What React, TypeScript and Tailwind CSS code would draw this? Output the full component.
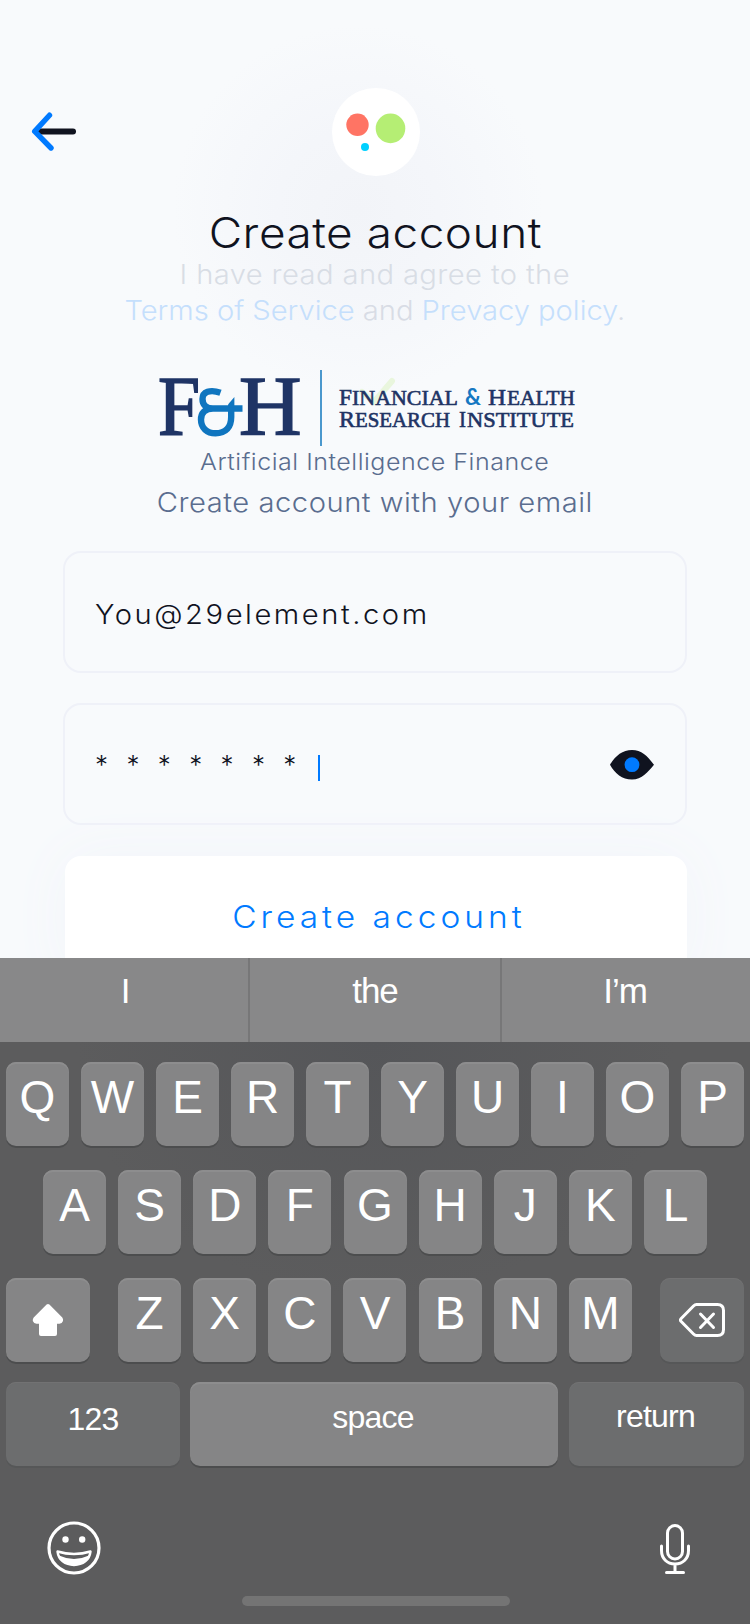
import React from 'react';

const brandFont = 'font-[Inter,sans-serif] font-[330] whitespace-nowrap scale-x-[1.08]';
const keyFont = "font-['Liberation_Sans',Arial,sans-serif] text-white";

function BackArrow() {
  return (
    <svg width="46" height="42" viewBox="0 0 46 42" fill="none" strokeLinecap="round">
      <path d="M10 20.5H42" stroke="#10131f" strokeWidth="6" />
      <path d="M18.5 4.2L3.7 20.4L20 37" stroke="#007aff" strokeWidth="5.4" strokeLinejoin="round" />
    </svg>
  );
}

function AppMark() {
  return (
    <svg width="88" height="88" viewBox="0 0 88 88">
      <circle cx="44" cy="44" r="44" fill="#fff" />
      <circle cx="25.5" cy="36.8" r="11.2" fill="#ff7464" />
      <circle cx="58.5" cy="40.4" r="14.8" fill="#b5ee74" />
      <circle cx="33" cy="59" r="4" fill="#00d0ff" />
    </svg>
  );
}

const bigCap = { fontSize: 84, stroke: '#1f3465', strokeWidth: 1.6, lengthAdjust: 'spacingAndGlyphs' } as const;
const smallCap = { stroke: '#1f3465', strokeWidth: 0.6, lengthAdjust: 'spacingAndGlyphs' } as const;

function InstituteLogo() {
  return (
    <svg width="420" height="80" viewBox="0 0 420 80" className="overflow-visible font-['Liberation_Serif',serif] font-normal" fill="#1f3465">
      <path d="M206 24L218 34L236 13" fill="none" stroke="#e9f6dd" strokeWidth="6" strokeLinecap="round" strokeLinejoin="round" />
      <text x="2" y="67" textLength="42" {...bigCap}>F</text>
      <text x="83" y="67" textLength="62.5" {...bigCap}>H</text>
      <path
        d="M64.5 24.8C54 21 46.5 24 46.5 31C46.5 37 50 40.5 57 40.5H86.5M57 40.5C48.500 40.5 45 45.500 45 51.500C45 60 51 65.3 59.500 65.3C70 65.3 75.200 59 75.200 49V39"
        fill="none"
        stroke="#f8fafc"
        strokeWidth="8"
      />
      <path
        d="M64.5 24.8C54 21 46.5 24 46.5 31C46.5 37 50 40.5 57 40.5H86.500M57 40.5C48.500 40.5 45 45.500 45 51.500C45 60 51 65.3 59.500 65.3C70 65.3 75.200 59 75.200 49V39"
        fill="none"
        stroke="#0f75bf"
        strokeWidth="6.4"
      />
      <path d="M72 39.500V36.500L78.400 29V39.500Z" fill="#0f75bf" />
      <rect x="164" y="2" width="2" height="76" fill="#4b98cd" />
      <g>
        <text x="183" y="37" fontSize="24" textLength="13" {...smallCap}>F</text>
        <text x="196" y="37" fontSize="20.500" textLength="106" {...smallCap}>INANCIAL</text>
        <text x="309" y="37" fontSize="22" fill="#1578c2" className="font-[Lato,sans-serif] font-bold" textLength="16" lengthAdjust="spacingAndGlyphs">&amp;</text>
        <text x="332" y="37" fontSize="24" textLength="18" {...smallCap}>H</text>
        <text x="351" y="37" fontSize="20.500" textLength="68" {...smallCap}>EALTH</text>
        <text x="183" y="59" fontSize="24" textLength="16" {...smallCap}>R</text>
        <text x="199" y="59" fontSize="20.500" textLength="95" {...smallCap}>ESEARCH</text>
        <text x="303" y="59" fontSize="24" textLength="7" {...smallCap}>I</text>
        <text x="311" y="59" fontSize="20.500" textLength="107" {...smallCap}>NSTITUTE</text>
      </g>
    </svg>
  );
}

function EyeIcon() {
  return (
    <svg width="44" height="30" viewBox="0 0 44 30">
      <path d="M0 14.800C5 6 12.500 0 22 0S38 6.500 44 14.800C38 22 32 29.600 22 29.600S5 23.500 0 14.800Z" fill="#10131f" />
      <circle cx="22" cy="14.700" r="7.400" fill="#007aff" />
    </svg>
  );
}

function ShiftIcon() {
  return (
    <svg width="32" height="34" viewBox="0 0 32 34" fill="#fff">
      <path d="M14.600 1.600Q16 .4 17.400 1.600L30.300 14.500Q31.500 16 31 18Q30 20.800 27.500 20.800H25V31Q25 33 23 33H9Q7 33 7 31V20.800H4.500Q2 20.800 .8 18Q.5 16 1.700 14.500Z" />
    </svg>
  );
}

function DeleteIcon() {
  return (
    <svg width="46" height="34" viewBox="0 0 46 34" fill="none" stroke="#fff" strokeWidth="3" strokeLinecap="round" strokeLinejoin="round">
      <path d="M17.500 1.500H38.500Q44.500 1.500 44.500 7.500V26.500Q44.500 32.500 38.500 32.500H17.500Q16 32.500 14.500 31L2.200 18.500Q.8 17 2.200 15.500L14.500 3Q16 1.500 17.500 1.500Z" />
      <path d="M21.500 11L34.500 24.500M34.500 11L21.500 24.500" />
    </svg>
  );
}

function EmojiIcon() {
  return (
    <svg width="54" height="54" viewBox="0 0 54 54">
      <circle cx="27" cy="27" r="25" fill="none" stroke="#fff" strokeWidth="3.200" />
      <circle cx="18.500" cy="18.500" r="3.200" fill="#fff" />
      <circle cx="35.200" cy="18.500" r="3.200" fill="#fff" />
      <path d="M10.500 30.500Q27 35.500 43.500 30.500C42.500 39 36 44 27 44S11.500 39 10.500 30.500Z" fill="none" stroke="#fff" strokeWidth="2.400" strokeLinejoin="round" />
      <path d="M12 34.500Q27 41.500 42 34.500C40 41 34 44.500 27 44.500S14 41 12 34.500Z" fill="#fff" />
    </svg>
  );
}

function MicIcon() {
  return (
    <svg width="30" height="50" viewBox="0 0 30 50" fill="none" stroke="#fff" strokeWidth="3" strokeLinecap="round">
      <rect x="7.500" y="1.500" width="15" height="33.500" rx="7.500" />
      <path d="M1.500 22V26.500C1.500 34.500 7 40 15 40S28.500 34.500 28.500 26.500V22M15 40V48.500M6.500 48.500H23.500" />
    </svg>
  );
}

const keyBase = 'flex h-[84px] shrink-0 justify-center rounded-[10px]';
const lightKey = 'bg-[#858586] shadow-[0_2px_0_#4c4d4e,inset_0_2px_0_#8d8d8e]';
const darkKey = 'bg-[#6c6d6e] shadow-[0_2px_0_#565758,inset_0_1px_0_#727273]';

function LetterRow({ letters, width }: { letters: string; width: string }) {
  return (
    <div className={`flex justify-between ${width}`}>
      {letters.split('').map((c) => (
        <div key={c} className={`${keyBase} ${lightKey} w-[63px]`}>
          <span className="pt-[9px] text-[46px] leading-[52px]">{c}</span>
        </div>
      ))}
    </div>
  );
}

export default function App() {
  return (
    <div className="flex h-[1624px] w-[750px] flex-col overflow-hidden bg-[#f8fafc]">
      <main className="flex h-[958px] flex-col items-center overflow-hidden bg-[radial-gradient(circle_at_358px_210px,#f2f4f8_0px,#f4f6fa_80px,#f8fafc_185px)]">
        <header className="grid w-full grid-cols-[332px_88px_1fr] items-center pt-[88px]">
          <div className="pl-[31px]">
            <BackArrow />
          </div>
          <AppMark />
        </header>
        <h1 className={`${brandFont} mt-[29px] h-[56px] text-[42.5px] leading-[56px] tracking-[0.5px] text-[#10131f]`}>Create account</h1>
        <p className={`${brandFont} mt-[-4px] h-[36px] text-[27px] leading-[36px] tracking-[0.36px] text-[#d8dde5]`}>I have read and agree to the</p>
        <p className={`${brandFont} mt-[-1px] h-[38px] text-[27px] leading-[38px] tracking-[-0.03px] text-[#d8dce5]`}>
          <span className="text-[#c5dffc]">Terms of Service</span> and <span className="text-[#c5dffc]">Prevacy policy</span>.
        </p>
        <div className="mt-[38px] h-[80px] w-[438px]">
          <InstituteLogo />
        </div>
        <p className={`${brandFont} mt-[-2px] h-[32px] text-[23.2px] leading-[32px] tracking-[0.47px] text-[#5a6d8f]`}>Artificial Intelligence Finance</p>
        <p className={`${brandFont} mt-[5px] h-[40px] text-[27px] leading-[40px] tracking-[0.48px] text-[#5a6d8f]`}>Create account with your email</p>
        <div className="mt-[28px] flex w-[624px] flex-col gap-[30px]">
          <div className="flex h-[122px] items-center rounded-[18px] border-2 border-[#eff1f8] pl-[30px]">
            <span className={`${brandFont} origin-left pt-[6px] text-[27px] leading-[36px] tracking-[2.35px] text-[#10131f]`}>You@29element.com</span>
          </div>
          <div className="flex h-[122px] items-center rounded-[18px] border-2 border-[#eff1f8] pr-[31px] pl-[30px]">
            <div className="flex h-[36px] font-[Inter,sans-serif] text-[26px] leading-[38px] font-light text-[#10131f]">
              {[0, 1, 2, 3, 4, 5, 6].map((i) => (
                <span key={i} className="w-[31.4px]">*</span>
              ))}
            </div>
            <div className="mt-[8px] ml-[3px] h-[26px] w-[2px] bg-[#007aff]" />
            <div className="mt-[1px] ml-auto">
              <EyeIcon />
            </div>
          </div>
          <div className="mt-[1px] ml-[2px] flex h-[122px] justify-center rounded-[16px] bg-white pt-[41px] pl-[5px] shadow-[0_0_60px_#f2f5fa]">
            <span className={`${brandFont} text-[31px] leading-[40px] tracking-[3.7px] text-[#007aff]`}>Create account</span>
          </div>
        </div>
      </main>
      <section className={`${keyFont} flex h-[666px] shrink-0 flex-col bg-[#5c5c5d]`}>
        <div className="grid h-[84px] grid-cols-[250px_252px_248px] bg-[#888889] text-center text-[35px] leading-[66px] tracking-[-1px]">
          <div className="border-r-2 border-[#777778] pl-[2px]">I</div>
          <div className="border-r-2 border-[#777778]">the</div>
          <div className="pr-[2px]">I’m</div>
        </div>
        <div className="flex flex-col items-center gap-[24px] bg-[radial-gradient(ellipse_at_50%_0%,#555659_0px,#5c5c5d_300px)] pt-[20px]">
          <LetterRow letters="QWERTYUIOP" width="w-[738px]" />
          <LetterRow letters="ASDFGHJKL" width="w-[664px]" />
          <div className="flex w-full justify-between px-[6px]">
            <div className={`${keyBase} ${lightKey} w-[84px] items-center`}>
              <ShiftIcon />
            </div>
            <LetterRow letters="ZXCVBNM" width="w-[514px]" />
            <div className={`${keyBase} ${darkKey} w-[84px] items-center`}>
              <DeleteIcon />
            </div>
          </div>
        </div>
        <div className="mt-[20px] flex px-[6px] text-[32px] leading-[40px] tracking-[-0.8px]">
          <div className={`${keyBase} ${darkKey} w-[174px] pt-[17px]`}>123</div>
          <div className={`${keyBase} ${lightKey} ml-[10px] w-[368px] pt-[15px] pr-[2px]`}>space</div>
          <div className={`${keyBase} ${darkKey} ml-[11px] w-[175px] pt-[14px] pr-[2px]`}>return</div>
        </div>
        <div className="mt-[56px] flex items-start justify-between pr-[60px] pl-[47px]">
          <div className="mt-[-1px] h-[55px]">
            <EmojiIcon />
          </div>
          <div className="pt-[2px]">
            <MicIcon />
          </div>
        </div>
        <div className="mt-[20px] ml-[242px] h-[10px] w-[268px] rounded-full bg-[#747474]" />
      </section>
    </div>
  );
}
